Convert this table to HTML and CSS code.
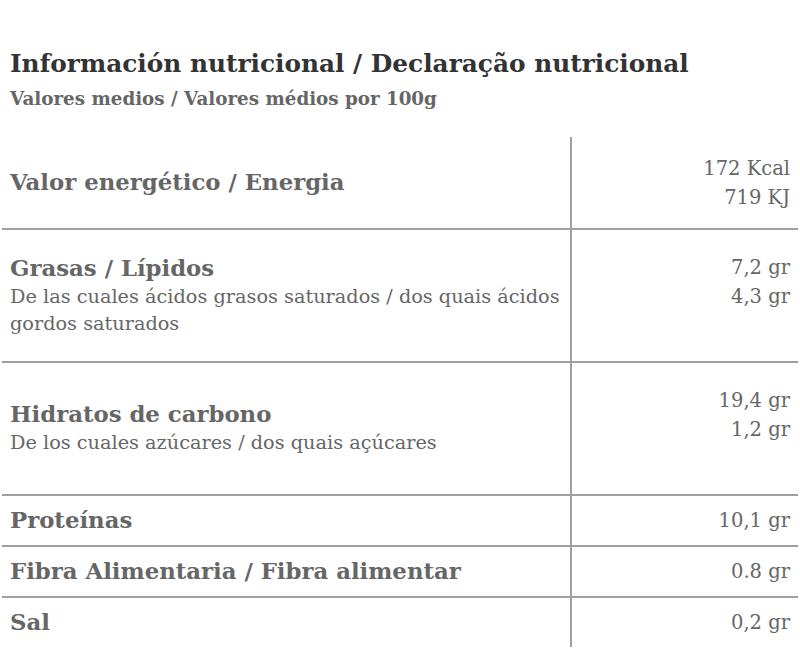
FILE: index.html
```html
<!DOCTYPE html>
<html lang="es">
<head>
<meta charset="utf-8">
<title>Información nutricional</title>
<link rel="stylesheet" href="styles.css">
</head>
<body>
<div class="page">
  <h1 class="title">Información nutricional / Declaração nutricional</h1>
  <p class="subtitle">Valores medios / Valores médios por 100g</p>
  <div class="table">
    <div class="row row-energy">
      <div class="label"><div class="cell"><strong class="name">Valor energético / Energia</strong></div></div>
      <div class="value"><div class="cell">172 Kcal<br>719 KJ</div></div>
    </div>
    <div class="row row-tall">
      <div class="label"><div class="cell"><strong class="name">Grasas / Lípidos</strong><br>De las cuales ácidos grasos saturados / dos quais ácidos gordos saturados</div></div>
      <div class="value value-up"><div class="cell">7,2 gr<br>4,3 gr</div></div>
    </div>
    <div class="row row-tall">
      <div class="label"><div class="cell"><strong class="name">Hidratos de carbono</strong><br>De los cuales azúcares / dos quais açúcares</div></div>
      <div class="value value-up"><div class="cell">19,4 gr<br>1,2 gr</div></div>
    </div>
    <div class="row row-small">
      <div class="label"><div class="cell"><strong class="name">Proteínas</strong></div></div>
      <div class="value"><div class="cell">10,1 gr</div></div>
    </div>
    <div class="row row-small">
      <div class="label"><div class="cell"><strong class="name">Fibra Alimentaria / Fibra alimentar</strong></div></div>
      <div class="value"><div class="cell">0.8 gr</div></div>
    </div>
    <div class="row row-small">
      <div class="label"><div class="cell"><strong class="name">Sal</strong></div></div>
      <div class="value"><div class="cell">0,2 gr</div></div>
    </div>
  </div>
</div>
</body>
</html>
```
FILE: styles.css
```css
* { box-sizing: border-box; }
html, body { margin: 0; padding: 0; background: #fff; }
body {
  font-family: "DejaVu Serif", "Liberation Serif", serif;
  color: #666;
}
.page {
  padding: 46px 2px 0 2px;
}
.title {
  margin: 0 0 0 8px;
  font-size: 24.8px;
  line-height: 36px;
  font-weight: bold;
  color: #333;
}
.subtitle {
  margin: 5px 0 0 8px;
  font-size: 18.3px;
  line-height: 24px;
  font-weight: bold;
  color: #666;
}
.table {
  margin-top: 26px;
}
.row {
  display: grid;
  grid-template-columns: 570px 1fr;
  border-top: 2px solid #a0a0a0;
}
.row:first-child { border-top: none; }
.label {
  border-right: 2px solid #a0a0a0;
  padding: 0 10px 0 8px;
  font-size: 19.3px;
  line-height: 27px;
  display: flex;
  align-items: center;
}
.name {
  font-size: 22.8px;
  color: #666;
}
.value {
  padding: 0 8px;
  text-align: right;
  font-size: 19.5px;
  line-height: 29px;
  display: flex;
  align-items: center;
  justify-content: flex-end;
}
.row-energy { height: 91px; }
.row-tall { height: 133px; }
.row-small { height: 51px; }
.value-up { padding-bottom: 28px; }
```
